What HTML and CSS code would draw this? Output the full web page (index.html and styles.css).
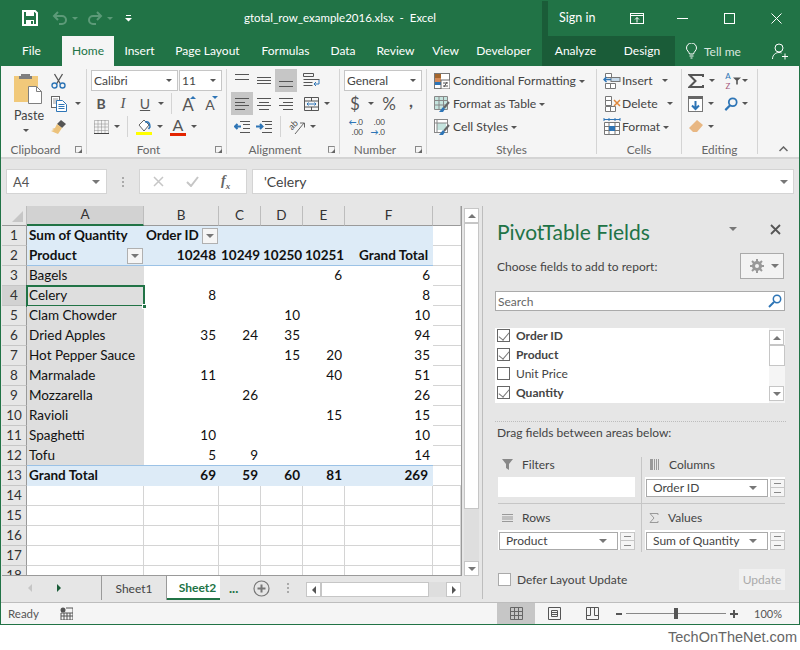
FILE: index.html
```html
<!DOCTYPE html>
<html>
<head>
  <title>gtotal_row_example2016.xlsx - Excel</title>
  <link rel="stylesheet" href="styles.css">
</head>
<body>
  <div class="window">

    <!-- Title bar -->
    <div class="titlebar">
      <div class="qat">
        <svg class="save" width="16" height="16" viewBox="0 0 16 16"><path d="M1 1h12l2 2v12H1z" fill="none" stroke="#fff" stroke-width="2"/><rect x="4" y="1" width="8" height="5" fill="#fff"/><rect x="4" y="10" width="8" height="5" fill="#fff"/><rect x="9" y="11" width="2" height="3" fill="#217346"/></svg>
        <svg width="16" height="14" viewBox="0 0 16 14"><path d="M6 1L2 5l4 4M2 5h8a4 4 0 0 1 0 8H7" fill="none" stroke="#5c9a78" stroke-width="2"/></svg>
        <i class="qat-caret"></i>
        <svg class="redo" width="16" height="14" viewBox="0 0 16 14"><path d="M10 1l4 4-4 4M14 5H6a4 4 0 0 0 0 8h3" fill="none" stroke="#5c9a78" stroke-width="2"/></svg>
        <i class="qat-caret"></i>
        <svg class="custom" width="7" height="7" viewBox="0 0 7 7"><path d="M1 .5h5M0 3h7L3.500 6.500z" fill="#fff" stroke="none"/><rect x="1" y="0" width="5" height="1" fill="#fff"/></svg>
      </div>
      <div class="doc-title">gtotal_row_example2016.xlsx&nbsp; -&nbsp; Excel</div>
      <div class="ctx-strip"></div>
      <div class="signin">Sign in</div>
      <div class="win-btns">
        <svg class="ribbon-opts" width="14" height="11" viewBox="0 0 14 11"><rect x=".5" y=".5" width="13" height="10" fill="none" stroke="#fff"/><path d="M1 2.500h12M7 9.500V4.500M5 6.500l2-2 2 2" fill="none" stroke="#fff"/></svg>
        <svg width="11" height="11" viewBox="0 0 11 11"><path d="M0 5.500h11" stroke="#fff"/></svg>
        <svg width="11" height="11" viewBox="0 0 11 11"><rect x=".5" y=".5" width="10" height="10" fill="none" stroke="#fff"/></svg>
        <svg width="11" height="11" viewBox="0 0 11 11"><path d="M.5.500l10 10M10.500.500l-10 10" stroke="#fff"/></svg>
      </div>
    </div>

    <!-- Tabs -->
    <div class="tabs">
      <div class="tab">File</div>
      <div class="tab active">Home</div>
      <div class="tab">Insert</div>
      <div class="tab">Page Layout</div>
      <div class="tab">Formulas</div>
      <div class="tab">Data</div>
      <div class="tab">Review</div>
      <div class="tab">View</div>
      <div class="tab">Developer</div>
      <div class="tab ctx">Analyze</div>
      <div class="tab ctx">Design</div>
      <div class="tellme">
        <svg width="11" height="16" viewBox="0 0 11 16"><path d="M3.500 11C3 8.500.5 7.500.5 5a5 5 0 0 1 10 0c0 2.500-2.500 3.500-3 6zM3.500 13h4M4.500 15h2" fill="none" stroke="#fff"/></svg>
        <span>Tell me</span>
      </div>
      <div class="person">
        <svg width="16" height="17" viewBox="0 0 16 17"><circle cx="7" cy="5" r="4" fill="none" stroke="#fff"/><path d="M.5 16c0-4 3-6.500 6.500-6.500 1 0 2 .2 2.500.5M10 13.500h6M13 10.500v6" fill="none" stroke="#fff"/></svg>
      </div>
    </div>

    <!-- Ribbon -->
    <div class="ribbon">

      <div class="group g-clipboard">
        <div class="clip-body">
          <div class="paste">
            <svg width="29" height="31" viewBox="0 0 29 31"><rect x="0" y="3" width="24" height="26" fill="#f1c97a"/><path d="M7 3V1h9v2h2v3H5V3z" fill="#7f7f7f"/><path d="M14.500 13.500h8l5 5v12h-13z" fill="#fff" stroke="#7f7f7f"/><path d="M22.500 13.500v5h5" fill="none" stroke="#7f7f7f"/></svg>
            <span>Paste</span>
            <i class="caret"></i>
          </div>
          <div class="clip-tools">
            <div class="rrow"><svg width="15" height="16" viewBox="0 0 15 16"><path d="M3.500 1l6 10M11.500 1l-6 10" stroke="#555" stroke-width="1.300" fill="none"/><circle cx="3.500" cy="12.500" r="2.500" fill="none" stroke="#2e75b6" stroke-width="1.400"/><circle cx="11.500" cy="12.500" r="2.500" fill="none" stroke="#2e75b6" stroke-width="1.400"/></svg></div>
            <div class="rrow"><svg width="16" height="16" viewBox="0 0 16 16"><rect x=".5" y=".5" width="8" height="11" fill="#fff" stroke="#666"/><path d="M2 3h5M2 5h5M2 7h5" stroke="#999"/><path d="M5.500 4.500h6l4 4v7h-10z" fill="#fff" stroke="#2e75b6"/><path d="M7.500 8.500h6M7.500 10.500h6M7.500 12.500h6" stroke="#2e75b6"/></svg><i class="caret cr-gap"></i></div>
            <div class="rrow"><svg width="16" height="16" viewBox="0 0 16 16"><path d="M10 1l5 4-4 4-5-4z" fill="#555"/><path d="M6 5l5 4-4 6-7-3 3-1-2-1 3-1z" fill="#ecc27b"/></svg></div>
          </div>
        </div>
        <div class="group-label">Clipboard</div>
        <i class="launch"></i>
      </div>

      <div class="group g-font">
        <div class="rrow combos">
          <div class="combo c-font"><span>Calibri</span><i class="caret"></i></div>
          <div class="combo c-size"><span>11</span><i class="caret"></i></div>
        </div>
        <div class="rrow">
          <div class="ib"><b class="glyph">B</b></div>
          <div class="ib"><em class="glyph serif">I</em></div>
          <div class="ib"><u class="glyph">U</u></div>
          <div class="cb"><i class="caret"></i></div>
          <div class="vsep"></div>
          <div class="ib"><span class="grow-a">A</span><i class="tri-up"></i></div>
          <div class="ib"><span class="shrink-a">A</span><i class="tri-down"></i></div>
        </div>
        <div class="rrow">
          <div class="ib"><svg width="15" height="14" viewBox="0 0 15 14"><path d="M.5.500h14v13H.5zM.5 7h14M7.500.500v13M4 .5v13M11 .5v13M.5 4h14M.5 10.500h14" fill="none" stroke="#888" stroke-dasharray="1 1"/><path d="M0 13.500h15" stroke="#444"/></svg></div>
          <div class="cb"><i class="caret"></i></div>
          <div class="vsep"></div>
          <div class="ib"><svg width="16" height="16" viewBox="0 0 16 16"><path d="M3 6l5-5 5 5-5 6z" fill="#fff" stroke="#666"/><path d="M9 3c3-1 5 1 5 5l-1.500 2" fill="none" stroke="#2e75b6" stroke-width="1.500"/><rect x="0" y="13" width="16" height="3" fill="#ffff00"/></svg></div>
          <div class="cb"><i class="caret"></i></div>
          <div class="ib spaced"><span class="color-a">A</span><i class="colorbar"></i></div>
          <div class="cb"><i class="caret"></i></div>
        </div>
        <div class="group-label">Font</div>
        <i class="launch"></i>
      </div>

      <div class="group g-align">
        <div class="rrow">
          <div class="ib tall"><svg class="top" width="14" height="6" viewBox="0 0 14 6"><path d="M0 .5h14M0 5.500h14" stroke="#555"/></svg></div>
          <div class="ib tall"><svg width="14" height="7" viewBox="0 0 14 7"><path d="M0 .5h14M0 3.500h14M0 6.500h14" stroke="#555"/></svg></div>
          <div class="ib tall on"><svg class="bottom" width="14" height="6" viewBox="0 0 14 6"><path d="M0 .5h14M0 5.500h14" stroke="#555"/></svg></div>
          <div class="ib tall wide"><svg width="17" height="15" viewBox="0 0 17 15"><path d="M.5.500h10v3H.5zM.5 6.500h16M.5 9.500h9M.5 12.500h9" fill="none" stroke="#555"/><path d="M16 7v4h-5M13 9l-2 2 2 2" fill="none" stroke="#2e75b6"/></svg></div>
        </div>
        <div class="rrow">
          <div class="ib tall on"><svg width="14" height="12" viewBox="0 0 14 12"><path d="M0 .5h14M0 4.500h10M0 7.500h14M0 11.500h10" stroke="#555"/></svg></div>
          <div class="ib tall"><svg width="14" height="12" viewBox="0 0 14 12"><path d="M0 .5h14M2 4.500h10M0 7.500h14M2 11.500h10" stroke="#555"/></svg></div>
          <div class="ib tall"><svg width="14" height="12" viewBox="0 0 14 12"><path d="M0 .5h14M4 4.500h10M0 7.500h14M4 11.500h10" stroke="#555"/></svg></div>
          <div class="ib tall wide"><svg width="15" height="14" viewBox="0 0 15 14"><path d="M.5.500h14v13H.5zM.5 4h14M.5 10h14M7.500.5V4M7.500 10v3.500" fill="none" stroke="#555"/><path d="M3 7h9M4.500 5.500L3 7l1.500 1.500M10.500 5.500L12 7l-1.500 1.500" fill="none" stroke="#2e75b6"/></svg></div>
          <div class="cb"><i class="caret"></i></div>
        </div>
        <div class="rrow">
          <div class="ib"><svg width="16" height="12" viewBox="0 0 16 12"><path d="M6 .5h10M9 3.500h7M9 7.500h7M6 11.500h10" stroke="#555"/><path d="M7 5.500H1M3.500 3L1 5.500 3.500 8" fill="none" stroke="#2e75b6" stroke-width="2"/></svg></div>
          <div class="ib"><svg width="16" height="12" viewBox="0 0 16 12"><path d="M6 .5h10M9 3.500h7M9 7.500h7M6 11.500h10" stroke="#555"/><path d="M0 5.500h6M4 3l2.500 2.500L4 8" fill="none" stroke="#2e75b6" stroke-width="2"/></svg></div>
          <div class="vsep"></div>
          <div class="ib"><svg class="orient" width="17" height="16" viewBox="0 0 17 16"><text x="1" y="9" transform="rotate(-45 5 8)" font-family="Lato" font-size="9" fill="#444">ab</text><path d="M6 15L15 4M11 4h4.500v4.500" fill="none" stroke="#666"/></svg></div>
          <div class="cb"><i class="caret"></i></div>
        </div>
        <div class="group-label">Alignment</div>
        <i class="launch"></i>
      </div>

      <div class="group g-number">
        <div class="rrow combos">
          <div class="combo c-format"><span>General</span><i class="caret"></i></div>
        </div>
        <div class="rrow">
          <div class="ib sym">$</div>
          <div class="cb"><i class="caret"></i></div>
          <div class="ib sym pct">%</div>
          <div class="ib sym comma">,</div>
        </div>
        <div class="rrow">
          <div class="ib dec"><span class="dec-top"><i class="arr">&#8592;</i>.0</span><span>.00</span></div>
          <div class="ib dec"><span>.00</span><span class="dec-top"><i class="arr">&#8594;</i>.0</span></div>
        </div>
        <div class="group-label">Number</div>
        <i class="launch"></i>
      </div>

      <div class="group g-styles">
        <div class="rrow">
          <svg width="16" height="16" viewBox="0 0 16 16"><rect x=".5" y=".5" width="15" height="15" fill="#fff" stroke="#777"/><rect x="1" y="1" width="6" height="4" fill="#a5662c"/><rect x="1" y="5" width="6" height="4" fill="#c55a11" opacity=".7"/><rect x="1" y="9" width="6" height="3" fill="#2e75b6"/><rect x="7" y="7" width="9" height="9" fill="#fff" stroke="#666"/><path d="M9 10h5M9 13h5M13 9l-3 5" stroke="#555"/></svg>
          <span class="ltext">Conditional Formatting</span><i class="caret mini"></i>
        </div>
        <div class="rrow">
          <svg width="16" height="16" viewBox="0 0 16 16"><path d="M.5.500h13v13H.5zM.5 4.500h13M.5 9h13M5 .5v13M9.500.5v13" fill="#c5e4de" stroke="#888"/><path d="M10 12l5-6" stroke="#666" stroke-width="2"/><path d="M5 16l4-5 2 2-2 3z" fill="#2e75b6"/></svg>
          <span class="ltext">Format as Table</span><i class="caret mini"></i>
        </div>
        <div class="rrow">
          <svg width="16" height="16" viewBox="0 0 16 16"><rect x=".5" y=".5" width="13" height="13" fill="#fff" stroke="#888"/><rect x="3" y="4" width="9" height="7" fill="#c5e4de"/><path d="M.5 4h13M3 .5v13" stroke="#888"/><path d="M10 12l5-6" stroke="#666" stroke-width="2"/><path d="M5 16l4-5 2 2-2 3z" fill="#2e75b6"/></svg>
          <span class="ltext">Cell Styles</span><i class="caret mini"></i>
        </div>
        <div class="group-label">Styles</div>
      </div>

      <div class="group g-cells">
        <div class="rrow">
          <svg width="18" height="16" viewBox="0 0 18 16"><path d="M2.500.500h6v4h-6zM2.500 10.500h5v5h-5zM7.500 10.500h5v5h-5z" fill="#fff" stroke="#777"/><rect x="8" y="4.500" width="9" height="4" fill="#c5d9ea" stroke="#777"/><path d="M8 6.500H1M3.500 4L1 6.500 3.500 9" fill="none" stroke="#2e75b6" stroke-width="1.500"/></svg>
          <span class="ltext">Insert</span><i class="caret far"></i>
        </div>
        <div class="rrow">
          <svg width="18" height="16" viewBox="0 0 18 16"><path d="M2.500.500h6v4h-6zM2.500 4.500h6v5h-6zM2.500 10.500h5v5h-5zM7.500 10.500h5v5h-5z" fill="#fff" stroke="#777"/><path d="M11 4l6 6M17 4l-6 6" stroke="#e0873a" stroke-width="1.500"/></svg>
          <span class="ltext">Delete</span><i class="caret far"></i>
        </div>
        <div class="rrow">
          <svg width="18" height="17" viewBox="0 0 18 17"><path d="M1 1.500h16M1 0v3M6 0v3M12 0v3M17 0v3" stroke="#2e75b6" fill="none"/><path d="M1.500 4.500h15v12h-15zM1.500 8.500h15M1.500 12.500h15M6 4.500v12M12 4.500v12" fill="#fff" stroke="#777"/><rect x="6" y="8" width="6" height="5" fill="#2e75b6"/></svg>
          <span class="ltext">Format</span><i class="caret mini"></i>
        </div>
        <div class="group-label">Cells</div>
      </div>

      <div class="group g-editing">
        <div class="rrow">
          <svg class="sigma" width="16" height="14" viewBox="0 0 16 14"><path d="M15 3V1H1.500l6 6-6 6H15v-2" fill="none" stroke="#555" stroke-width="2"/></svg>
          <div class="cb"><i class="caret"></i></div>
          <span class="sort"><span class="sa">A</span><span class="sz">Z</span></span>
          <svg class="funnel" width="8" height="8" viewBox="0 0 10 9"><path d="M0 0h10L6 4v5H4V4z" fill="#555"/></svg>
          <div class="cb tight"><i class="caret"></i></div>
        </div>
        <div class="rrow">
          <svg class="sigma" width="15" height="16" viewBox="0 0 15 16"><rect x=".5" y=".5" width="14" height="15" fill="#fff" stroke="#777"/><rect x="0" y="0" width="15" height="3" fill="#666"/><path d="M7.500 5v8M4 9.500l3.500 3.500L11 9.500" fill="none" stroke="#2e75b6" stroke-width="2"/></svg>
          <div class="cb"><i class="caret"></i></div>
          <svg class="find" width="14" height="14" viewBox="0 0 16 16"><circle cx="10" cy="6" r="4.500" fill="none" stroke="#2e75b6" stroke-width="2"/><path d="M7 9.500L1.500 15" stroke="#2e75b6" stroke-width="2.500"/></svg>
          <div class="cb"><i class="caret"></i></div>
        </div>
        <div class="rrow">
          <svg class="sigma" width="15" height="14" viewBox="0 0 15 14"><path d="M9 0l6 5-6 7H5L1 8z" fill="#e8b783"/></svg>
          <div class="cb"><i class="caret"></i></div>
        </div>
        <div class="group-label">Editing</div>
      </div>

      <svg class="collapse" width="9" height="6" viewBox="0 0 9 6"><path d="M.5 5l4-4 4 4" fill="none" stroke="#666" stroke-width="1.500"/></svg>
    </div>

    <!-- Formula bar -->
    <div class="formula-bar">
      <div class="namebox"><span>A4</span><i class="caret big"></i></div>
      <div class="fb-dots"><i></i><i></i><i></i></div>
      <div class="fx-box">
        <svg width="11" height="11" viewBox="0 0 11 11"><path d="M1 1l9 9M10 1l-9 9" stroke="#c6c6c6" stroke-width="1.500"/></svg>
        <svg width="13" height="11" viewBox="0 0 13 11"><path d="M1 6l4 4 7-9" fill="none" stroke="#c6c6c6" stroke-width="2"/></svg>
        <em class="fx">f<sub>x</sub></em>
      </div>
      <div class="fb-input"><span>'Celery</span><i class="caret big"></i></div>
    </div>

    <div class="main">
      <div class="workarea">
        <div class="sheet-row">
          <div class="sheet">
            <table class="grid">
              <colgroup><col class="c0"><col class="ca"><col class="cb-col"><col class="cc"><col class="cd"><col class="ce"><col class="cf"><col class="cg"></colgroup>
              <tr class="head"><th class="corner"><i></i></th><th class="cur">A</th><th>B</th><th>C</th><th>D</th><th>E</th><th>F</th><th class="blank"></th></tr>
              <tr class="blue"><th>1</th><td class="b">Sum of Quantity</td><td class="b">Order ID <i class="filter"></i></td><td></td><td></td><td></td><td></td><td class="g"></td></tr>
              <tr class="blue line"><th>2</th><td class="b">Product <i class="filter"></i></td><td class="n b">10248</td><td class="n b">10249</td><td class="n b">10250</td><td class="n b">10251</td><td class="n b gt">Grand Total</td><td class="g"></td></tr>
              <tr><th>3</th><td class="lab">Bagels</td><td></td><td></td><td></td><td class="n">6</td><td class="n">6</td><td class="g"></td></tr>
              <tr><th class="cur">4</th><td class="lab sel">Celery<i class="handle"></i></td><td class="n">8</td><td></td><td></td><td></td><td class="n">8</td><td class="g"></td></tr>
              <tr><th>5</th><td class="lab">Clam Chowder</td><td></td><td></td><td class="n">10</td><td></td><td class="n">10</td><td class="g"></td></tr>
              <tr><th>6</th><td class="lab">Dried Apples</td><td class="n">35</td><td class="n">24</td><td class="n">35</td><td></td><td class="n">94</td><td class="g"></td></tr>
              <tr><th>7</th><td class="lab">Hot Pepper Sauce</td><td></td><td></td><td class="n">15</td><td class="n">20</td><td class="n">35</td><td class="g"></td></tr>
              <tr><th>8</th><td class="lab">Marmalade</td><td class="n">11</td><td></td><td></td><td class="n">40</td><td class="n">51</td><td class="g"></td></tr>
              <tr><th>9</th><td class="lab">Mozzarella</td><td></td><td class="n">26</td><td></td><td></td><td class="n">26</td><td class="g"></td></tr>
              <tr><th>10</th><td class="lab">Ravioli</td><td></td><td></td><td></td><td class="n">15</td><td class="n">15</td><td class="g"></td></tr>
              <tr><th>11</th><td class="lab">Spaghetti</td><td class="n">10</td><td></td><td></td><td></td><td class="n">10</td><td class="g"></td></tr>
              <tr class="above-total"><th>12</th><td class="lab">Tofu</td><td class="n">5</td><td class="n">9</td><td></td><td></td><td class="n">14</td><td class="g"></td></tr>
              <tr class="blue total"><th>13</th><td class="b">Grand Total</td><td class="n b">69</td><td class="n b">59</td><td class="n b">60</td><td class="n b">81</td><td class="n b gt">269</td><td class="g"></td></tr>
              <tr class="empty"><th>14</th><td></td><td></td><td></td><td></td><td></td><td></td><td></td></tr>
              <tr class="empty"><th>15</th><td></td><td></td><td></td><td></td><td></td><td></td><td></td></tr>
              <tr class="empty"><th>16</th><td></td><td></td><td></td><td></td><td></td><td></td><td></td></tr>
              <tr class="empty"><th>17</th><td></td><td></td><td></td><td></td><td></td><td></td><td></td></tr>
              <tr class="empty"><th>18</th><td></td><td></td><td></td><td></td><td></td><td></td><td></td></tr>
            </table>
          </div>
          <div class="vscroll">
            <div class="sb-btn"><i class="tri t-up"></i></div>
            <div class="sb-thumb"></div>
            <div class="sb-track"></div>
            <div class="sb-btn"><i class="tri t-down"></i></div>
          </div>
        </div>
        <div class="sheet-tabs">
          <div class="tab-nav">
            <i class="tri t-left off"></i>
            <i class="tri t-right on"></i>
          </div>
          <div class="stab">Sheet1</div>
          <div class="stab active">Sheet2</div>
          <div class="tab-more">...</div>
          <svg class="add-sheet" width="17" height="17" viewBox="0 0 17 17"><circle cx="8.500" cy="8.500" r="7.500" fill="none" stroke="#777" stroke-width="1.200"/><path d="M8.500 4.500v8M4.500 8.500h8" stroke="#777" stroke-width="2"/></svg>
          <div class="fb-dots tab-dots"><i></i><i></i><i></i></div>
          <div class="hscroll">
            <div class="sb-btn"><i class="tri t-left"></i></div>
            <div class="sb-thumb"></div>
            <div class="sb-track"></div>
            <div class="sb-btn"><i class="tri t-right"></i></div>
          </div>
        </div>
      </div>

      <!-- PivotTable Fields pane -->
      <div class="pane">
        <div class="pane-head">
          <h1>PivotTable Fields</h1>
          <i class="caret big pane-caret"></i>
          <svg class="pane-close" width="11" height="11" viewBox="0 0 11 11"><path d="M1 1l9 9M10 1l-9 9" stroke="#555" stroke-width="1.800"/></svg>
        </div>
        <div class="choose">
          <span>Choose fields to add to report:</span>
          <div class="gear-btn">
            <svg width="14" height="14" viewBox="0 0 14 14"><circle cx="7" cy="7" r="3.500" fill="none" stroke="#999" stroke-width="3"/><path d="M7 0v3M7 11v3M0 7h3M11 7h3M2 2l2 2M10 10l2 2M2 12l2-2M10 4l2-2" stroke="#999" stroke-width="2"/></svg>
            <i class="caret big"></i>
          </div>
        </div>
        <div class="search">
          <span>Search</span>
          <svg width="14" height="14" viewBox="0 0 14 14"><circle cx="9" cy="5" r="3.700" fill="none" stroke="#2e75b6" stroke-width="1.500"/><path d="M6 8l-5 5" stroke="#2e75b6" stroke-width="2"/></svg>
        </div>
        <div class="fields">
          <div class="field-list">
            <div class="field"><i class="check on"></i><b>Order ID</b></div>
            <div class="field"><i class="check on"></i><b>Product</b></div>
            <div class="field"><i class="check"></i><span>Unit Price</span></div>
            <div class="field"><i class="check on"></i><b>Quantity</b></div>
          </div>
          <div class="fscroll">
            <div class="sb-btn"><i class="tri t-up"></i></div>
            <div class="sb-thumb"></div>
            <div class="sb-track"></div>
            <div class="sb-btn"><i class="tri t-down"></i></div>
          </div>
        </div>
        <div class="dash"></div>
        <div class="drag">Drag fields between areas below:</div>
        <div class="areas">
          <div class="area a-tl">
            <div class="area-label">
              <svg width="11" height="11" viewBox="0 0 11 11"><path d="M0 0h11L7 5v6L4 9V5z" fill="#888"/></svg>
              <span>Filters</span>
            </div>
            <div class="drop"></div>
          </div>
          <div class="area a-tr">
            <div class="area-label">
              <svg width="11" height="11" viewBox="0 0 11 11"><path d="M1 0h3v11H1z" fill="#999"/><path d="M5.500 0v11M7.500 0v11M9.500 0v11" stroke="#999"/></svg>
              <span>Columns</span>
            </div>
            <div class="pick">
              <div class="pick-box"><span>Order ID</span><i class="caret big"></i></div>
              <div class="spin"><i></i></div>
            </div>
          </div>
          <div class="area a-bl">
            <div class="area-label">
              <svg width="11" height="8" viewBox="0 0 11 8"><path d="M0 .5h11M0 3h11M0 5h11M0 7.500h11" stroke="#999"/></svg>
              <span>Rows</span>
            </div>
            <div class="pick">
              <div class="pick-box"><span>Product</span><i class="caret big"></i></div>
              <div class="spin"><i></i></div>
            </div>
          </div>
          <div class="area a-br">
            <div class="area-label">
              <svg width="10" height="10" viewBox="0 0 10 10"><path d="M9 2V.5H1L5 5 1 9.500h8V8" fill="none" stroke="#999"/></svg>
              <span>Values</span>
            </div>
            <div class="pick">
              <div class="pick-box"><span>Sum of Quantity</span><i class="caret big"></i></div>
              <div class="spin"><i></i></div>
            </div>
          </div>
        </div>
        <div class="pane-foot">
          <i class="check plain"></i>
          <span>Defer Layout Update</span>
          <div class="update">Update</div>
        </div>
      </div>
    </div>

    <!-- Status bar -->
    <div class="statusbar">
      <span class="ready">Ready</span>
      <svg class="macro" width="13" height="13" viewBox="0 0 13 13"><circle cx="3" cy="3" r="2.500" fill="#555"/><path d="M6 1h7v12H1V6h12M1 9h12M4 6v7M7 6v7M10 6v7" fill="none" stroke="#555"/></svg>
      <div class="views">
        <div class="view on"><svg width="13" height="13" viewBox="0 0 13 13"><path d="M.5.500h12v12H.5zM.5 4.500h12M.5 8.500h12M4.500.5v12M8.500.5v12" fill="none" stroke="#666"/></svg></div>
        <div class="view"><svg width="13" height="13" viewBox="0 0 13 13"><path d="M.5.500h12v12H.5z" fill="none" stroke="#555"/><path d="M3.500 3.500h6v6h-6zM3.500 5.500h6M3.500 7.500h6" fill="none" stroke="#555"/></svg></div>
        <div class="view"><svg width="13" height="13" viewBox="0 0 13 13"><path d="M.5.500h12v12H.5zM.5 8.500h4v-8M8.500.5v8h4" fill="none" stroke="#555"/></svg></div>
      </div>
      <div class="zoom">
        <i class="z-minus"></i>
        <div class="z-track"><i class="z-thumb"></i></div>
        <i class="z-plus"></i>
        <span>100%</span>
      </div>
    </div>
  </div>

  <div class="watermark">TechOnTheNet.com</div>
</body>
</html>
```

FILE: styles.css
```css
* {
  box-sizing: border-box;
}

body {
  margin: 0;
  background: #fff;
  font-family: Lato, "Open Sans", sans-serif;
  font-size: 12px;
  color: #444;
}

i {
  font-style: normal;
}

svg {
  display: block;
  flex: none;
}

.window {
  width: 800px;
  height: 625px;
  border: 1px solid #217346;
  border-top: none;
  display: flex;
  flex-direction: column;
  overflow: hidden;
}

/* Title bar */
.titlebar {
  height: 36px;
  background: #217346;
  color: #fff;
  display: flex;
  align-items: center;
  position: relative;
}

.qat {
  display: flex;
  align-items: center;
  width: 243px;
  padding-left: 21px;
}

.qat svg {
  margin-right: 4px;
}

.qat .save {
  margin-right: 14px;
}

.qat .redo {
  margin-left: 9px;
}

.qat .custom {
  margin-left: 12px;
}

.qat-caret {
  width: 0;
  height: 0;
  border: 3px solid transparent;
  border-top: 3px solid #5c9a78;
  border-bottom: none;
}

.doc-title {
  width: 298px;
  white-space: nowrap;
  padding-bottom: 2px;
  font-size: 11.500px;
}

.ctx-strip {
  width: 6px;
  height: 35px;
  align-self: flex-end;
  background: #1a5c38;
}

.signin {
  margin-left: 11px;
  width: 50px;
  padding-bottom: 2px;
  font-size: 12.500px;
}

.win-btns {
  display: flex;
  align-items: center;
  gap: 36px;
  margin-left: 21px;
}

.ribbon-opts {
  margin-right: -3px;
}

/* Tabs */
.tabs {
  height: 30px;
  background: #217346;
  color: #fff;
  display: grid;
  grid-template-columns: 61px 52px 51px 85px 71px 44px 61px 39px 77px 67px 66px 97px 1fr;
  align-items: stretch;
}

.tab {
  display: flex;
  align-items: center;
  justify-content: center;
  padding-bottom: 1px;
}

.tab.active {
  background: #f5f5f5;
  color: #217346;
}

.tab.ctx {
  background: #1a5c38;
}

.tellme {
  display: flex;
  align-items: center;
  gap: 7px;
  padding-left: 11px;
  color: #d8e6de;
}

.person {
  display: flex;
  align-items: center;
}

/* Ribbon */
.ribbon {
  height: 93px;
  background: #f5f5f5;
  border-bottom: 2px solid #d4d4d4;
  display: flex;
  padding-top: 3px;
  position: relative;
}

.group {
  height: 85px;
  border-right: 1px solid #d4d4d4;
  position: relative;
}

.group-label {
  position: absolute;
  left: 0;
  right: 0;
  top: 73px;
  font-size: 11.800px;
  text-align: center;
  color: #666;
  line-height: 15px;
}

.group-label:has(+ .launch) {
  padding-right: 16px;
}

.launch {
  position: absolute;
  right: 4px;
  top: 77px;
  width: 7px;
  height: 7px;
  border-left: 1px solid #888;
  border-top: 1px solid #888;
  border-right: 1px solid #bbb;
  border-bottom: 1px solid #bbb;
}

.launch::after {
  content: "";
  position: absolute;
  right: -1px;
  bottom: -1px;
  border: 2px solid #666;
  border-left-color: transparent;
  border-top-color: transparent;
}

.rrow {
  height: 23px;
  display: flex;
  align-items: center;
}

.caret {
  display: block;
  flex: none;
  width: 0;
  height: 0;
  border-left: 3px solid transparent;
  border-right: 3px solid transparent;
  border-top: 3px solid #555;
}

.caret.big {
  border-left-width: 4px;
  border-right-width: 4px;
  border-top-width: 4px;
  border-top-color: #777;
}

.ib {
  width: 22px;
  height: 23px;
  flex: none;
  display: flex;
  align-items: center;
  justify-content: center;
  position: relative;
}

.ib.on {
  background: #c6c6c6;
}

.ib.wide {
  margin-left: 3px;
}

.ib.spaced {
  margin-left: 2px;
}

.cb {
  width: 10px;
  flex: none;
  display: flex;
  justify-content: center;
}

.cb.tight {
  margin-left: -1px;
}

.vsep {
  width: 1px;
  height: 21px;
  background: #d4d4d4;
  margin: 0 5px;
  flex: none;
}

.glyph {
  font-size: 14px;
  color: #555;
}

.glyph.serif {
  font-family: "Liberation Serif", serif;
  font-size: 15px;
}

.g-clipboard {
  width: 86px;
}

.clip-body {
  display: flex;
}

.paste {
  width: 50px;
  padding-left: 13px;
  padding-top: 4px;
  display: flex;
  flex-direction: column;
  font-size: 12.500px;
}

.paste span {
  line-height: 18px;
  margin-top: 3px;
}

.paste .caret {
  margin: 4px 0 0 9px;
}

.clip-tools .cr-gap {
  margin-left: 8px;
}

.g-font {
  width: 140px;
  padding-left: 3px;
}

.combos {
  gap: 1px;
}

.combo {
  height: 21px;
  background: #fff;
  border: 1px solid #c6c6c6;
  display: flex;
  align-items: center;
  justify-content: space-between;
  padding: 0 5px 0 2px;
}

.c-font {
  width: 87px;
  margin-left: 1px;
}

.c-size {
  width: 43px;
}

.c-format {
  width: 78px;
}

.grow-a {
  font-size: 17px;
  color: #555;
  margin-top: 1px;
}

.shrink-a {
  font-size: 14px;
  color: #555;
  margin-top: 2px;
}

.tri-up,
.tri-down {
  position: absolute;
  right: 3px;
  top: 4px;
  border-left: 3px solid transparent;
  border-right: 3px solid transparent;
}

.tri-up {
  border-bottom: 3px solid #2e75b6;
}

.tri-down {
  border-top: 3px solid #2e75b6;
}

.color-a {
  font-size: 16px;
  color: #555;
  margin-top: -4px;
}

.colorbar {
  position: absolute;
  left: 3px;
  bottom: 2px;
  width: 16px;
  height: 3px;
  background: #e32400;
}

.g-align {
  width: 113px;
  padding-left: 4px;
}

.ib.tall svg.top {
  margin-bottom: 8px;
}

.ib.tall svg.bottom {
  margin-top: 7px;
}

.orient {
  overflow: visible;
}

.g-number {
  width: 87px;
  padding-left: 4px;
}

.sym {
  font-size: 17px;
  color: #555;
}

.pct {
  margin-left: 2px;
}

.comma {
  font-weight: 700;
  margin-top: -6px;
}

.dec {
  flex-direction: column;
  font-size: 8px;
  line-height: 10px;
  color: #444;
  align-items: flex-end;
  padding-right: 3px;
}

.arr {
  color: #2e75b6;
  font-weight: 700;
}

.g-styles {
  width: 170px;
  padding-left: 7px;
  font-size: 12.200px;
}

.g-styles .ltext,
.g-cells .ltext {
  margin-left: 3px;
  margin-right: 3px;
  white-space: nowrap;
}

.caret.mini {
  margin-top: 1px;
}

.g-cells {
  width: 85px;
  padding-left: 6px;
  font-size: 12.200px;
}

.g-cells .ltext {
  margin-left: 1px;
}

.caret.far {
  margin-left: 6px;
}

.g-editing {
  width: 76px;
  padding-left: 6px;
}

.sigma {
  margin-right: 3px;
}

.sort {
  width: 8px;
  margin-left: 7px;
  display: flex;
  flex-direction: column;
  align-items: center;
  font-size: 8px;
  line-height: 10px;
  margin-right: 1px;
}

.sa {
  color: #2e75b6;
}

.sz {
  color: #a4557a;
}

.find {
  margin-left: 8px;
  margin-right: 2px;
}

.collapse {
  position: absolute;
  right: 11px;
  bottom: 5px;
}

/* Formula bar */
.formula-bar {
  height: 47px;
  background: #e6e6e6;
  display: flex;
  align-items: flex-start;
  padding: 10px 5px 0 5px;
}

.namebox {
  width: 101px;
  height: 25px;
  background: #fff;
  border: 1px solid #d4d4d4;
  display: flex;
  align-items: center;
  justify-content: space-between;
  padding: 0 6px;
  color: #555;
  font-size: 13px;
}

.fb-dots {
  display: flex;
  flex-direction: column;
  gap: 2px;
  width: 32px;
  height: 25px;
  align-items: center;
  justify-content: center;
}

.fb-dots i {
  width: 2px;
  height: 2px;
  background: #aaa;
}

.fx-box {
  width: 108px;
  height: 25px;
  background: #fff;
  border: 1px solid #d4d4d4;
  display: flex;
  align-items: center;
  gap: 22px;
  padding-left: 13px;
}

.fx {
  font-family: "Liberation Serif", serif;
  font-size: 14px;
  font-weight: 700;
  color: #666;
  white-space: nowrap;
}

.fx sub {
  font-size: 9px;
}

.fb-input {
  margin-left: 5px;
  flex: 1;
  height: 25px;
  background: #fff;
  border: 1px solid #d4d4d4;
  display: flex;
  align-items: center;
  justify-content: space-between;
  padding: 0 5px 0 11px;
  font-size: 14px;
}

/* Sheet */
.main {
  flex: 1;
  min-height: 0;
  background: #e6e6e6;
  display: flex;
}

.workarea {
  width: 481px;
  flex: none;
  display: flex;
  flex-direction: column;
  padding-right: 1px;
}

.sheet-row {
  height: 370px;
  display: flex;
}

.sheet {
  width: 460px;
  height: 370px;
  overflow: hidden;
  border-right: 1px solid #9a9a9a;
  border-bottom: 1px solid #9a9a9a;
  margin-left: 1px;
  background: #e6e6e6;
}

.grid {
  table-layout: fixed;
  border-collapse: separate;
  border-spacing: 0;
  width: 459px;
  font-family: Lato, "Liberation Sans", sans-serif;
  font-size: 13.500px;
  color: #111;
  background: #fff;
}

.c0 { width: 25px; }
.ca { width: 117px; }
.cb-col { width: 75px; }
.cc { width: 42px; }
.cd { width: 42px; }
.ce { width: 42px; }
.cf { width: 88px; }
.cg { width: 28px; }

.grid tr {
  height: 20px;
}

.grid th {
  font-weight: 400;
  background: #e6e6e6;
  color: #333;
  padding: 0 0 2px 0;
  text-align: center;
  border-right: 1px solid #9a9a9a;
  border-bottom: 1px solid #c6c6c6;
  height: 20px;
}

.grid .head th {
  height: 20px;
  border-right: 1px solid #bdbdbd;
  border-bottom: 1px solid #9a9a9a;
  background: #e6e6e6;
}

.grid .head th.cur {
  background: #d2d2d2;
  border-bottom: 2px solid #217346;
}

.grid th.cur {
  background: #d2d2d2;
}

.corner {
  position: relative;
}

.corner i {
  position: absolute;
  right: 3px;
  bottom: 3px;
  width: 0;
  height: 0;
  border-left: 11px solid transparent;
  border-bottom: 11px solid #c6c6c6;
}

.grid td {
  height: 20px;
  padding: 0 3px 2px 2px;
  white-space: nowrap;
  overflow: hidden;
  position: relative;
}

.grid td.g {
  border-bottom: 1px solid #d4d4d4;
}

.n {
  text-align: right;
}

.grid td.gt {
  padding-right: 5px;
}

.b {
  font-weight: 700;
}

.lab {
  background: #dedede;
}

.blue td:not(.g) {
  background: #ddebf7;
}

.blue.line td:not(.g),
.above-total td:not(.g) {
  border-bottom: 1px solid #9bc2e6;
}

.empty td {
  border-right: 1px solid #d4d4d4;
  border-bottom: 1px solid #d4d4d4;
}

.filter {
  position: absolute;
  top: 2px;
  right: 1px;
  width: 16px;
  height: 16px;
  background: #f5f5f5;
  border: 1px solid #b0b0b0;
}

.filter::after {
  content: "";
  position: absolute;
  left: 3px;
  top: 5px;
  border-left: 4px solid transparent;
  border-right: 4px solid transparent;
  border-top: 4px solid #777;
}

.grid td.sel {
  overflow: visible;
  outline: 2px solid #217346;
  outline-offset: -1px;
}

.handle {
  position: absolute;
  right: -3px;
  bottom: -3px;
  width: 5px;
  height: 5px;
  background: #217346;
  border: 1px solid #fff;
  z-index: 2;
}

/* Scrollbars */
.vscroll {
  width: 15px;
  margin-left: 2px;
  margin-top: 2px;
  height: 368px;
  display: flex;
  flex-direction: column;
  background: #dedede;
}

.sb-btn {
  flex: none;
  width: 15px;
  height: 15px;
  background: #fff;
  border: 1px solid #c6c6c6;
  display: flex;
  align-items: center;
  justify-content: center;
}

.sb-thumb {
  flex: none;
  background: #fff;
  border: 1px solid #c6c6c6;
}

.sb-track {
  flex: 1;
}

.vscroll .sb-thumb {
  height: 286px;
}

.tri {
  display: block;
  width: 0;
  height: 0;
  border: 4px solid transparent;
}

.t-up {
  border-bottom-color: #777;
  border-top: none;
}

.t-down {
  border-top-color: #777;
  border-bottom: none;
}

.t-left {
  border-right-color: #555;
  border-left: none;
}

.t-right {
  border-left-color: #555;
  border-right: none;
}

/* Sheet tabs */
.sheet-tabs {
  height: 28px;
  display: flex;
  align-items: flex-start;
}

.tab-nav {
  width: 100px;
  height: 24px;
  display: flex;
  align-items: center;
  padding-left: 27px;
  gap: 25px;
}

.tab-nav .off {
  border-right-color: #c6c6c6;
}

.tab-nav .on {
  border-left-color: #1a5c38;
}

.stab {
  height: 24px;
  width: 66px;
  display: flex;
  align-items: center;
  justify-content: center;
  border-left: 1px solid #9a9a9a;
  border-right: 1px solid #9a9a9a;
}

.stab.active {
  width: 53px;
  border: none;
  border-bottom: 2px solid #217346;
  background: #fff;
  color: #217346;
  font-weight: 700;
  height: 24px;
  padding-left: 8px;
  overflow: hidden;
}

.tab-more {
  width: 33px;
  padding-left: 9px;
  font-size: 13px;
  font-weight: 700;
  color: #217346;
  height: 24px;
  line-height: 24px;
}

.add-sheet {
  margin-top: 4px;
}

.tab-dots {
  width: 36px;
  height: 24px;
  margin-top: 0;
}

.hscroll {
  display: flex;
  width: 155px;
  height: 15px;
  margin-top: 6px;
  background: #dedede;
}

.hscroll .sb-thumb {
  width: 108px;
}

/* Pane */
.pane {
  flex: 1;
  border-left: 1px solid #bdbdbd;
  padding: 0 14px;
  position: relative;
  margin-bottom: 3px;
}

.pane-head {
  height: 40px;
  display: flex;
  align-items: flex-end;
  position: relative;
}

.pane-head h1 {
  margin: 0;
  font-size: 21px;
  font-weight: 400;
  color: #217346;
  line-height: 28px;
}

.pane-caret {
  position: absolute;
  left: 232px;
  top: 21px;
}

.pane-close {
  position: absolute;
  left: 273px;
  top: 18px;
}

.choose {
  display: flex;
  align-items: center;
  justify-content: space-between;
  height: 26px;
  margin-top: 7px;
}

.gear-btn {
  width: 44px;
  height: 26px;
  border: 1px solid #aaa;
  background: #f3f3f3;
  display: flex;
  align-items: center;
  gap: 7px;
  padding-left: 9px;
  margin-right: 1px;
}

.search {
  margin-top: 12px;
  margin-left: -2px;
  width: 290px;
  height: 20px;
  background: #fff;
  border: 1px solid #aaa;
  display: flex;
  align-items: center;
  justify-content: space-between;
  padding: 0 2px;
  color: #666;
}

.fields {
  margin-top: 17px;
  margin-left: -2px;
  width: 290px;
  height: 75px;
  background: #fff;
  display: flex;
}

.field-list {
  flex: 1;
  margin-top: -2px;
}

.field {
  height: 19px;
  display: flex;
  align-items: center;
  gap: 6px;
  padding-left: 2px;
}

.check {
  width: 13px;
  height: 13px;
  border: 1px solid #666;
  background: #fff;
  display: block;
  flex: none;
  position: relative;
}

.check.on::after {
  content: "";
  position: absolute;
  left: 3px;
  top: 0;
  width: 5px;
  height: 9px;
  border: solid #777;
  border-width: 0 1px 1px 0;
  transform: rotate(40deg);
}

.check.plain {
  border-color: #aaa;
}

.fscroll {
  width: 16px;
  padding-top: 2px;
  padding-bottom: 2px;
  display: flex;
  flex-direction: column;
  background: #f5f5f5;
}

.fscroll .sb-thumb {
  height: 21px;
}

.dash {
  margin-top: 18px;
  border-top: 1px dotted #bdbdbd;
  height: 1px;
  margin-left: -2px;
  margin-right: -1px;
}

.drag {
  margin-top: 3px;
  line-height: 16px;
}

.areas {
  margin-top: 16px;
  margin-left: 1px;
  width: 287px;
  display: grid;
  grid-template-columns: 144px 143px;
  grid-template-rows: 47px 48px;
}

.a-tl,
.a-bl {
  border-right: 1px solid #c6c6c6;
  padding-right: 6px;
}

.a-tl,
.a-tr {
  border-bottom: 1px solid #c6c6c6;
}

.a-tr,
.a-br {
  padding-left: 3px;
}

.a-bl,
.a-br {
  padding-top: 6px;
}

.area-label {
  height: 20px;
  display: flex;
  align-items: center;
  gap: 9px;
  padding: 0 0 5px 4px;
}

.drop {
  height: 20px;
  background: #fff;
}

.pick {
  display: flex;
  height: 20px;
  padding: 2px 0 0 1px;
  background: #fff;
}

.pick-box {
  flex: 1;
  min-width: 0;
  border: 1px solid #aaa;
  display: flex;
  align-items: center;
  justify-content: space-between;
  padding: 0 10px 1px 6px;
  white-space: nowrap;
}

.spin {
  width: 15px;
  margin-left: 2px;
  border: 1px solid #c6c6c6;
  background: #f5f5f5;
  position: relative;
}

.spin i {
  position: absolute;
  left: 3px;
  right: 3px;
  top: 3px;
  bottom: 3px;
  border-top: 1px solid #888;
  border-bottom: 1px solid #888;
}

.spin::after {
  content: "";
  position: absolute;
  left: 0;
  right: 0;
  top: 7px;
  border-top: 1px solid #c6c6c6;
}

.pane-foot {
  margin-top: 20px;
  margin-left: 1px;
  display: flex;
  align-items: center;
  gap: 6px;
  position: relative;
}

.update {
  position: absolute;
  left: 241px;
  top: -3px;
  width: 46px;
  height: 21px;
  background: #f0f0f0;
  color: #aaa;
  display: flex;
  align-items: center;
  justify-content: center;
}

/* Status bar */
.statusbar {
  height: 22px;
  flex: none;
  background: #f5f5f5;
  border-top: 1px solid #bdbdbd;
  display: flex;
  align-items: center;
  padding-left: 7px;
  font-size: 11.500px;
  color: #555;
}

.macro {
  margin-left: 21px;
}

.views {
  display: flex;
  margin-left: auto;
  align-self: stretch;
}

.view {
  width: 38px;
  display: flex;
  align-items: center;
  justify-content: center;
}

.view.on {
  background: #c6c6c6;
}

.zoom {
  width: 188px;
  padding-left: 5px;
  display: flex;
  align-items: center;
  font-size: 11px;
}

.z-minus {
  width: 6px;
  height: 2px;
  background: #555;
}

.z-track {
  width: 100px;
  height: 1px;
  background: #888;
  margin: 0 4px;
  position: relative;
}

.z-thumb {
  position: absolute;
  left: 48px;
  top: -5px;
  width: 4px;
  height: 11px;
  background: #555;
}

.z-plus {
  width: 8px;
  height: 8px;
  background:
    linear-gradient(#555, #555) center / 8px 2px no-repeat,
    linear-gradient(#555, #555) center / 2px 8px no-repeat;
}

.zoom span {
  margin-left: 16px;
}

.watermark {
  height: 25px;
  padding-right: 3px;
  text-align: right;
  line-height: 25px;
  font-family: "Liberation Sans", sans-serif;
  font-size: 14.500px;
  color: #666;
}
```
